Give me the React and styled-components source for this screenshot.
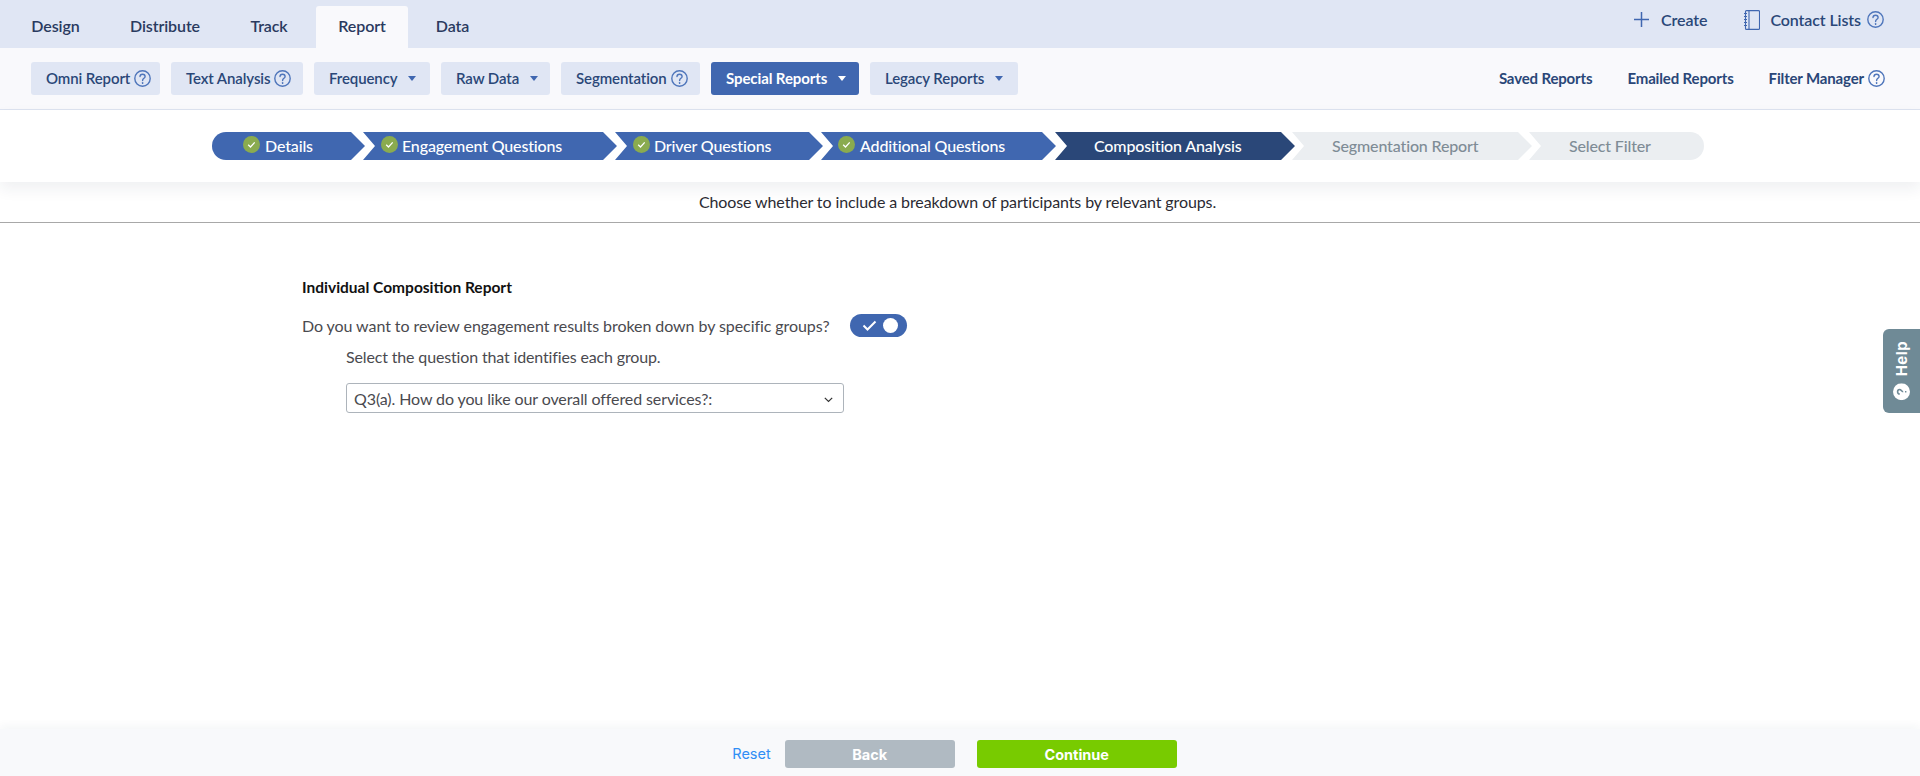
import React from "react";
import styled, { createGlobalStyle } from "styled-components";

const Global = createGlobalStyle`
  html, body { margin: 0; padding: 0; background: #fff; }
  body { font-family: Lato, "Open Sans", "Liberation Sans", sans-serif; overflow: hidden; }
  * { box-sizing: border-box; }
`;

const Page = styled.div`
  position: relative;
  height: 776px;
  display: flex;
  flex-direction: column;
`;
const TopBar = styled.header`
  height: 48px;
  background: #e0e6f4;
  display: flex;
  align-items: flex-end;
  justify-content: space-between;
  padding: 0 36px 0 8px;
`;
const Tabs = styled.nav`
  display: flex;
  gap: 5px;
  height: 42px;
`;
const Tab = styled.div`
  width: ${p => p.$w}px;
  display: flex;
  align-items: center;
  justify-content: center;
  padding-bottom: 4px;
  font-size: 16px;
  font-weight: 600;
  letter-spacing: -0.1px;
  color: #2a3a5f;
  border-radius: 3px 3px 0 0;
  background: ${p => (p.$active ? "#f9f9fc" : "transparent")};
`;
const TopActions = styled.div`
  display: flex;
  align-items: center;
  height: 42px;
  padding-bottom: 15px;
`;
const TopAction = styled.div`
  display: flex;
  align-items: center;
  gap: ${p => p.$gap}px;
  margin-left: ${p => p.$ml || 0}px;
  font-size: 16px;
  font-weight: 600;
  letter-spacing: -0.1px;
  color: #2a4778;
`;
const ContactLabel = styled.span`
  margin-left: 4px;
`;
const SubBar = styled.div`
  height: 62px;
  background: #f9f9fc;
  border-bottom: 1px solid #dde3f0;
  display: flex;
  align-items: center;
  justify-content: space-between;
  padding: 0 35px 1px 31px;
`;
const Chips = styled.div`
  display: flex;
  gap: 11px;
`;
const Chip = styled.div`
  width: ${p => p.$w}px;
  height: 33px;
  border-radius: 3px;
  padding-left: 15px;
  display: flex;
  align-items: center;
  gap: 4px;
  font-size: 15px;
  font-weight: ${p => (p.$active ? 700 : 600)};
  letter-spacing: -0.1px;
  color: ${p => (p.$active ? "#fff" : "#2a4778")};
  background: ${p => (p.$active ? "#4067b0" : "#e0e6f4")};
`;
const Caret = styled.span`
  width: 0;
  height: 0;
  margin-left: 7px;
  border-left: 4px solid transparent;
  border-right: 4px solid transparent;
  border-top: 5px solid ${p => (p.$light ? "#fff" : "#4067b0")};
`;
const SubLinks = styled.div`
  display: flex;
  align-items: center;
  gap: 35px;
`;
const SubLink = styled.div`
  display: flex;
  align-items: center;
  gap: 4px;
  font-size: 15px;
  font-weight: 700;
  letter-spacing: -0.15px;
  color: #2a4778;
`;
const StepPanel = styled.div`
  height: 72px;
  background: #fff;
  padding: 22px 4px 0 0;
  display: flex;
  justify-content: center;
  align-items: flex-start;
  box-shadow: 0 7px 14px rgba(30, 40, 70, 0.07);
  position: relative;
`;
const Step = styled.div`
  width: ${p => p.$w}px;
  height: 28px;
  flex: none;
  margin-left: ${p => p.$ml}px;
  padding-left: ${p => p.$pl}px;
  padding-bottom: 2px;
  display: flex;
  align-items: center;
  gap: ${p => p.$gap || 0}px;
  font-size: 16px;
  font-weight: 500;
  letter-spacing: -0.15px;
  color: ${p => (p.$state === "todo" ? "#7f8c96" : "#fff")};
  background: ${p => ({ done: "#4067b0", current: "#2a4778", todo: "#ebeef1" }[p.$state])};
  border-radius: ${p => (p.$first ? "14px 0 0 14px" : p.$last ? "0 14px 14px 0" : "0")};
  clip-path: ${p =>
    p.$first
      ? "polygon(0 0, calc(100% - 14px) 0, 100% 50%, calc(100% - 14px) 100%, 0 100%)"
      : p.$last
      ? "polygon(0 0, 100% 0, 100% 100%, 0 100%, 12px 50%)"
      : "polygon(0 0, calc(100% - 14px) 0, 100% 50%, calc(100% - 14px) 100%, 0 100%, 12px 50%)"};
`;
const CheckDot = styled.svg`
  width: 17px;
  height: 17px;
  flex: none;
  margin-top: -2px;
`;
const Subtitle = styled.div`
  height: 41px;
  padding: 0 5px 2px 0;
  border-bottom: 1px solid #a8a8a8;
  display: flex;
  align-items: center;
  justify-content: center;
  font-size: 16px;
  letter-spacing: -0.1px;
  color: #2b2b33;
`;
const Form = styled.main`
  flex: 1;
  padding: 55px 0 0 302px;
`;
const Heading = styled.h2`
  margin: 0;
  height: 18px;
  line-height: 18px;
  font-size: 15.5px;
  font-weight: 700;
  color: #111;
`;
const QuestionRow = styled.div`
  display: flex;
  align-items: center;
  margin-top: 18px;
  height: 23px;
  font-size: 16px;
  letter-spacing: -0.07px;
  color: #4a4a4f;
`;
const QuestionText = styled.span`
  width: 548px;
`;
const Toggle = styled.div`
  position: relative;
  width: 57px;
  height: 23px;
  border-radius: 12px;
  background: #4067b0;
`;
const Knob = styled.span`
  position: absolute;
  right: 9px;
  top: 4px;
  width: 15px;
  height: 15px;
  border-radius: 50%;
  background: #fff;
`;
const ToggleCheck = styled.svg`
  position: absolute;
  left: 12px;
  top: 6px;
  width: 15px;
  height: 11px;
`;
const Indented = styled.div`
  margin-left: 44px;
`;
const Hint = styled.div`
  margin-top: 10px;
  height: 20px;
  line-height: 20px;
  font-size: 16px;
  letter-spacing: -0.15px;
  color: #4a4a4f;
`;
const Select = styled.div`
  margin-top: 16px;
  width: 498px;
  height: 30px;
  border: 1px solid #adb4bb;
  border-radius: 3px;
  padding: 0 10px 0 7px;
  display: flex;
  align-items: center;
  justify-content: space-between;
  font-size: 16px;
  letter-spacing: -0.1px;
  color: #4a4a4f;
`;
const Chevron = styled.svg`
  margin-top: 4px;
`;
const Footer = styled.footer`
  height: 47px;
  background: #f8f9fb;
  box-shadow: 0 -4px 8px rgba(30, 40, 70, 0.04);
  display: flex;
  justify-content: center;
  align-items: flex-start;
  padding: 11px 11px 0 0;
  font-family: Inter, "Liberation Sans", sans-serif;
`;
const ResetLink = styled.a`
  font-size: 14.5px;
  line-height: 28px;
  color: #2f8ef5;
  margin-right: 14px;
`;
const FootButton = styled.button`
  width: ${p => p.$w}px;
  height: 28px;
  border: 0;
  border-radius: 3px;
  margin-right: ${p => p.$mr || 0}px;
  background: ${p => p.$bg};
  color: #fff;
  font-family: inherit;
  font-size: 14.5px;
  font-weight: 700;
`;
const HelpTab = styled.div`
  position: absolute;
  right: 0;
  top: 329px;
  width: 37px;
  height: 84px;
  background: #6f8a96;
  border-radius: 6px 0 0 6px;
  display: flex;
  align-items: center;
  justify-content: center;
  writing-mode: vertical-rl;
`;
const HelpInner = styled.div`
  transform: rotate(180deg);
  display: flex;
  align-items: center;
  gap: 7px;
  color: #fff;
  font-family: Inter, "Liberation Sans", sans-serif;
  font-size: 15px;
  font-weight: 700;
  letter-spacing: 0.4px;
`;
const HelpIcon = styled.svg`
  width: 17px;
  height: 17px;
  transform: rotate(90deg);
`;

const QIcon = () => (
  <svg width="17" height="17" viewBox="0 0 17 17" fill="none" stroke="#4f76bb" strokeWidth="1.4">
    <circle cx="8.5" cy="8.5" r="7.7" />
    <path d="M6 6.6c0-1.5 1.2-2.4 2.6-2.4s2.5 1 2.5 2.2c0 1.9-2.5 2-2.5 4.1" strokeLinecap="round" />
    <path d="M8.6 12.6v.8" strokeLinecap="round" />
  </svg>
);
const Check = () => (
  <CheckDot viewBox="0 0 17 17">
    <circle cx="8.5" cy="8.5" r="8.5" fill="#8aab4f" />
    <path d="M5.2 8.7l2.3 2.3 4.2-4.6" fill="none" stroke="#fff" strokeWidth="1.3" />
  </CheckDot>
);

const steps = [
  { label: "Details", w: 153, ml: 0, pl: 31, gap: 5, state: "done", check: true, first: true },
  { label: "Engagement Questions", w: 254, ml: -2, pl: 18, gap: 4, state: "done", check: true },
  { label: "Driver Questions", w: 208, ml: -2, pl: 18, gap: 4, state: "done", check: true },
  { label: "Additional Questions", w: 235, ml: -2, pl: 17, gap: 5, state: "done", check: true },
  { label: "Composition Analysis", w: 240, ml: -1, pl: 39, state: "current" },
  { label: "Segmentation Report", w: 240, ml: -3, pl: 40, state: "todo" },
  { label: "Select Filter", w: 175, ml: -3, pl: 40, state: "todo", last: true },
];

export default function App() {
  return (
    <Page>
      <Global />
      <TopBar>
        <Tabs>
          <Tab $w={95}>Design</Tab>
          <Tab $w={114}>Distribute</Tab>
          <Tab $w={84}>Track</Tab>
          <Tab $w={92} $active>Report</Tab>
          <Tab $w={79}>Data</Tab>
        </Tabs>
        <TopActions>
          <TopAction $gap={12}>
            <svg width="15" height="15" viewBox="0 0 15 15" stroke="#4067b0" strokeWidth="1.5">
              <path d="M7.5 0v15M0 7.5h15" />
            </svg>
            Create
          </TopAction>
          <TopAction $gap={6} $ml={37}>
            <svg width="16" height="20" viewBox="0 0 16 20" fill="none" stroke="#4067b0" strokeWidth="1.1">
              <rect x="1.5" y="0.6" width="14" height="18.8" rx="1" />
              <path d="M5 0.6v18.8M0 3.5h3M0 6.5h3M0 9.5h3M0 12.5h3M0 15.5h3" />
            </svg>
            <ContactLabel>Contact Lists</ContactLabel>
            <QIcon />
          </TopAction>
        </TopActions>
      </TopBar>
      <SubBar>
        <Chips>
          <Chip $w={129}>Omni Report <QIcon /></Chip>
          <Chip $w={132}>Text Analysis <QIcon /></Chip>
          <Chip $w={116}>Frequency <Caret /></Chip>
          <Chip $w={109}>Raw Data <Caret /></Chip>
          <Chip $w={139}>Segmentation <QIcon /></Chip>
          <Chip $w={148} $active>Special Reports <Caret $light /></Chip>
          <Chip $w={148}>Legacy Reports <Caret /></Chip>
        </Chips>
        <SubLinks>
          <SubLink>Saved Reports</SubLink>
          <SubLink>Emailed Reports</SubLink>
          <SubLink>Filter Manager <QIcon /></SubLink>
        </SubLinks>
      </SubBar>
      <StepPanel>
        {steps.map(s => (
          <Step key={s.label} $w={s.w} $ml={s.ml} $pl={s.pl} $gap={s.gap} $state={s.state} $first={s.first} $last={s.last}>
            {s.check && <Check />}
            {s.label}
          </Step>
        ))}
      </StepPanel>
      <Subtitle>Choose whether to include a breakdown of participants by relevant groups.</Subtitle>
      <Form>
        <Heading>Individual Composition Report</Heading>
        <QuestionRow>
          <QuestionText>Do you want to review engagement results broken down by specific groups?</QuestionText>
          <Toggle>
            <ToggleCheck viewBox="0 0 15 11">
              <path d="M1.5 5.5l4 4 8-8" fill="none" stroke="#fff" strokeWidth="2" />
            </ToggleCheck>
            <Knob />
          </Toggle>
        </QuestionRow>
        <Indented>
          <Hint>Select the question that identifies each group.</Hint>
          <Select>
            Q3(a). How do you like our overall offered services?:
            <Chevron width="9" height="6" viewBox="0 0 9 6" fill="none" stroke="#333" strokeWidth="1.2">
              <path d="M0.8 0.8l3.7 3.7 3.7-3.7" />
            </Chevron>
          </Select>
        </Indented>
      </Form>
      <Footer>
        <ResetLink>Reset</ResetLink>
        <FootButton $w={170} $mr={22} $bg="#b0bac2">Back</FootButton>
        <FootButton $w={200} $bg="#78cb00">Continue</FootButton>
      </Footer>
      <HelpTab>
        <HelpInner>
          <HelpIcon viewBox="0 0 17 17">
            <circle cx="8.5" cy="8.5" r="8.5" fill="#fff" />
            <path d="M6.2 6.8c0-1.4 1-2.2 2.3-2.2s2.3.9 2.3 2c0 1.7-2.3 1.8-2.3 3.6M8.5 12v1.4" fill="none" stroke="#6f8a96" strokeWidth="1.6" />
          </HelpIcon>
          Help
        </HelpInner>
      </HelpTab>
    </Page>
  );
}
